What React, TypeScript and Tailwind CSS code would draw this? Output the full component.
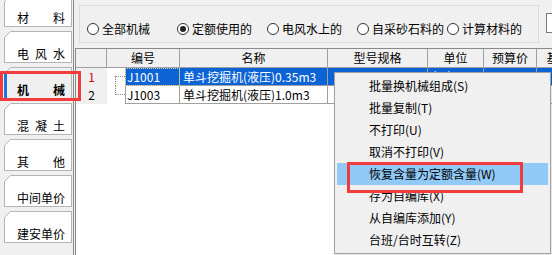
import React from 'react';

const tabs = [
  { label: ['材', '料'] },
  { label: ['电', '风', '水'] },
  { label: ['机', '械'], active: true },
  { label: ['混', '凝', '土'] },
  { label: ['其', '他'] },
  { label: ['中', '间', '单', '价'] },
  { label: ['建', '安', '单', '价'] },
];

const radios = [
  { text: '全部机械' },
  { text: '定额使用的', checked: true },
  { text: '电风水上的' },
  { text: '自采砂石料的' },
  { text: '计算材料的' },
];

const menuItems = [
  '批量换机械组成(S)',
  '批量复制(T)',
  '不打印(U)',
  '取消不打印(V)',
  '恢复含量为定额含量(W)',
  '存为自编库(X)',
  '从自编库添加(Y)',
  '台班/台时互转(Z)',
];

const rows = [
  { no: '1', code: 'J1001', name: '单斗挖掘机(液压)0.35m3', unit: '台班', selected: true },
  { no: '2', code: 'J1003', name: '单斗挖掘机(液压)1.0m3', unit: '台班' },
];

function TabStrip() {
  return (
    <div className="w-[74px] h-full shrink-0 border-r border-[#8a8a8a] bg-[#f0f0f0] overflow-hidden">
      <div className="flex flex-col gap-[4px] mt-[-5px]">
        {tabs.map((t, i) => (
          <div
            key={i}
            className={`relative ml-[4px] w-[68px] h-[32px] shrink-0 border-l border-t border-b border-r border-[#b4b4b4] flex items-center pt-[14px] pl-[12px] ${
              t.active ? 'bg-[#f0f0f0] font-bold' : 'bg-white'
            }`}
          >
            {/* cut corner */}
            <svg className="absolute -left-px -top-px" width="7" height="7" viewBox="0 0 7 7">
              <path d="M0 0 H7 L0 7 Z" fill="#f0f0f0" />
              <path d="M0.5 6.5 L6.5 0.5" stroke="#b4b4b4" strokeWidth="1" />
            </svg>
            {t.active && <div className="absolute left-[-1px] top-[4px] w-[3px] h-[26px] bg-[#1a78dc]" />}
            <span className="flex w-[48px] justify-between text-[12px] leading-none text-black">
              {t.label.map((c, j) => (
                <span key={j}>{c}</span>
              ))}
            </span>
          </div>
        ))}
      </div>
    </div>
  );
}

function Radio({ text, checked }: { text: string; checked?: boolean }) {
  return (
    <div className="w-[90px] shrink-0 flex items-center gap-[3px]">
      <span className="w-[12px] h-[12px] rounded-full border border-[#333] bg-white flex items-center justify-center">
        {checked && <span className="w-[6px] h-[6px] rounded-full bg-[#222]" />}
      </span>
      <span className="text-[12px] leading-none whitespace-nowrap">{text}</span>
    </div>
  );
}

function Grid() {
  const head = 'h-full flex items-center justify-center border-r border-[#a0a0a0] shrink-0';
  return (
    <div className="flex-1 ml-[1px] bg-white border-t border-l border-[#8a8a8a] overflow-hidden">
      {/* header */}
      <div className="h-[19px] flex bg-[#f0f0f0] border-b border-[#a0a0a0] text-[12px] leading-none">
        <div className={`${head} w-[31px]`} />
        <div className={`${head} w-[73px]`}>编号</div>
        <div className={`${head} w-[148px]`}>名称</div>
        <div className={`${head} w-[100px]`}>型号规格</div>
        <div className={`${head} w-[56px]`}>单位</div>
        <div className={`${head} w-[53px]`}>预算价</div>
        <div className={`${head} w-[44px]`}>基价</div>
      </div>
      {rows.map((r, i) => {
        const cell = `h-full flex items-center border-r border-b border-[#a0a0a0] shrink-0 whitespace-nowrap overflow-hidden ${
          r.selected ? 'bg-[#0b63d6] text-white' : 'text-black'
        }`;
        return (
          <div key={i} className="h-[18px] flex text-[12px] leading-none">
            <div className={`w-[31px] h-full bg-[#f0f0f0] flex items-center justify-center shrink-0 ${r.selected ? 'text-[#e00000]' : ''}`}>
              {r.no}
            </div>
            <div className="relative w-[18px] h-full shrink-0">
              {i === 0 ? (
                <div className="absolute left-[8px] top-[8px] w-[10px] h-[10px] border-l border-t border-dotted border-[#8a8a8a]" />
              ) : (
                <div className="absolute left-[8px] top-0 w-[10px] h-[9px] border-l border-b border-dotted border-[#8a8a8a]" />
              )}
            </div>
            <div className={`${cell} w-[55px] border-l pl-[1px] ${r.selected ? 'outline outline-1 outline-dotted outline-[#d8d8a0] -outline-offset-1' : ''}`}>
              {r.code}
            </div>
            <div className={`${cell} w-[148px] pl-[3px]`}>{r.name}</div>
            <div className={`${cell} w-[100px]`} />
            <div className={`${cell} w-[56px] pl-[2px]`}>{r.unit}</div>
            <div className={`${cell} w-[53px]`} />
            <div className={`${cell} w-[60px]`} />
          </div>
        );
      })}
    </div>
  );
}

export default function App() {
  return (
    <div className="relative w-[552px] h-[255px] flex bg-[#f0f0f0] overflow-hidden font-['Noto_Sans_CJK_SC','Noto_Sans',sans-serif] text-black">
      <TabStrip />

      <div className="flex-1 flex flex-col min-w-0">
        {/* top filter bar */}
        <div className="h-[48px] shrink-0 flex items-start pt-[5px] pl-[5px]">
          <div className="w-[460px] h-[38px] shrink-0 border border-[#dcdcdc] flex items-center pt-[10px] pl-[7px]">
            {radios.map((r, i) => (
              <Radio key={i} text={r.text} checked={r.checked} />
            ))}
          </div>
          <div className="ml-[7px] mt-[8px] w-[30px] h-[20px] shrink-0 bg-white border border-[#7a7a7a]" />
        </div>

        <Grid />
      </div>

      {/* context menu */}
      <div className="absolute left-[334px] top-[72px] w-[217px] border border-[#a0a0a0] bg-[#f0f0f0] pt-[2px] pb-[2px] shadow-[1px_1px_2px_rgba(0,0,0,0.15)]">
        {menuItems.map((m, i) => (
          <div
            key={i}
            className={`mx-[2px] h-[22px] flex items-center pl-[32px] text-[12px] leading-none whitespace-nowrap ${
              i === 4 ? 'bg-[#91c9f7]' : ''
            }`}
          >
            {m}
          </div>
        ))}
      </div>

      {/* red annotation boxes */}
      <div className="absolute left-0 top-[71px] w-[81px] h-[30px] border-[3px] border-[#f03c3c] pointer-events-none" />
      <div className="absolute left-[347px] top-[162px] w-[176px] h-[31px] border-[3px] border-[#f03c3c] pointer-events-none" />
    </div>
  );
}
